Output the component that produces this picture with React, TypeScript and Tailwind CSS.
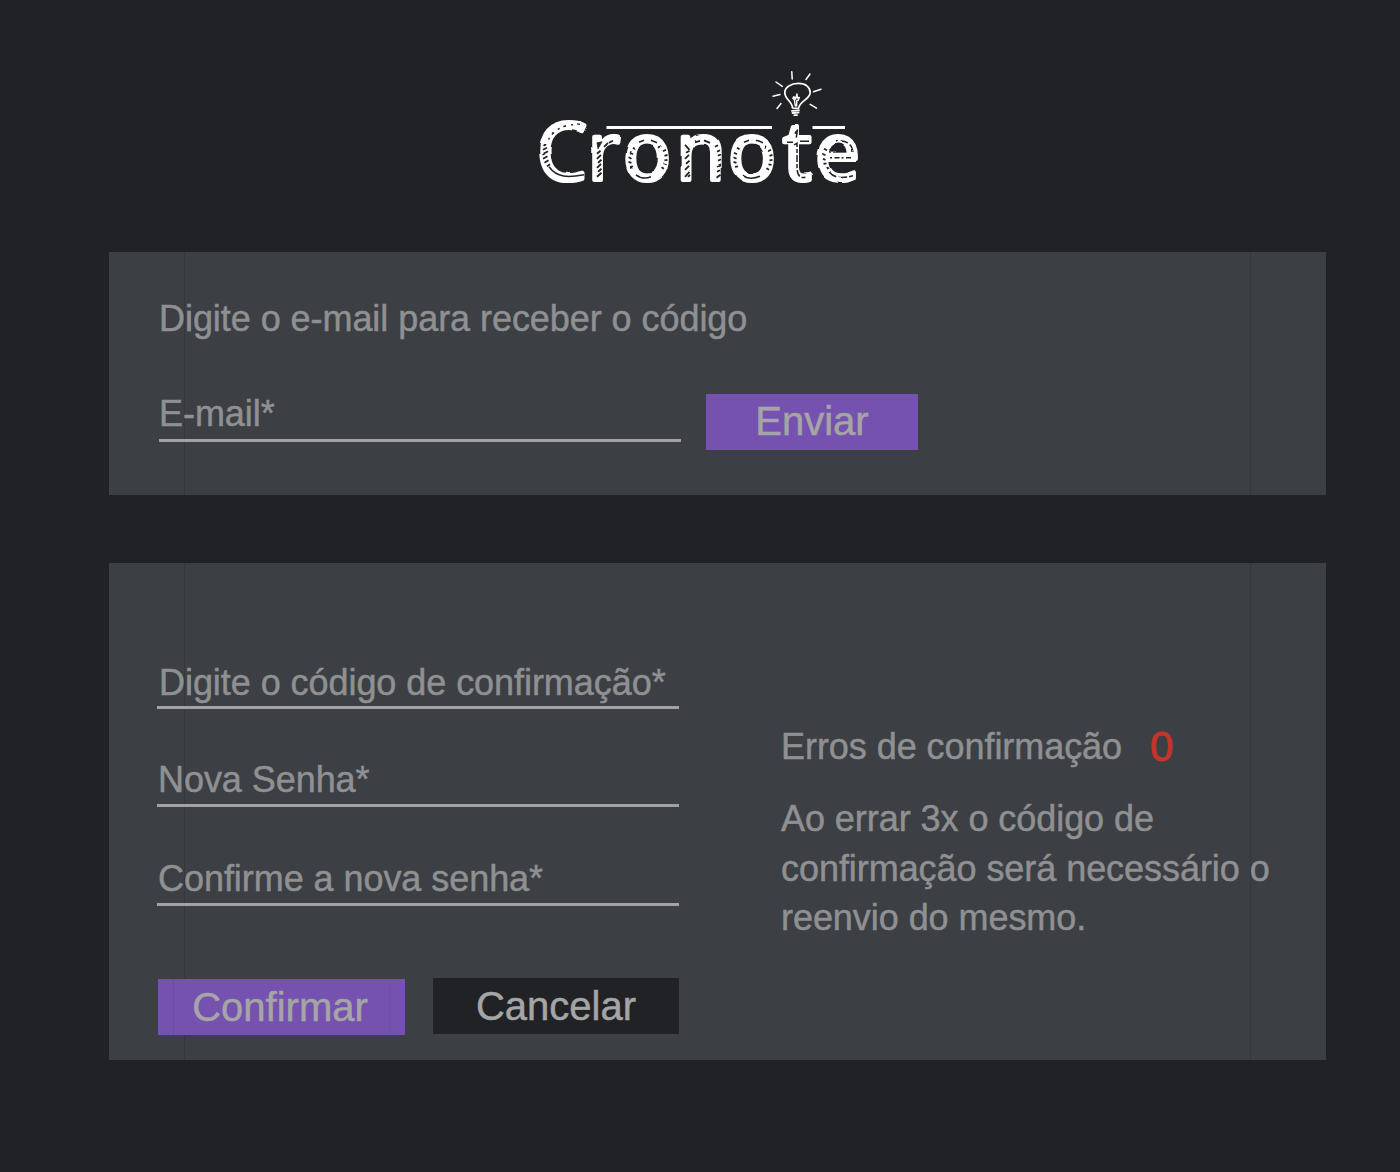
import type { ReactNode } from 'react';

function Logo() {
  return (
    <svg width="340" height="150" viewBox="0 0 340 150" className="block overflow-visible" role="img" aria-label="Cronote">
      <defs>
        <filter id="wobble" x="-5%" y="-5%" width="110%" height="110%" colorInterpolationFilters="sRGB">
          <feTurbulence type="fractalNoise" baseFrequency="0.05" numOctaves="1" seed="4" result="noise" />
          <feDisplacementMap in="SourceGraphic" in2="noise" scale="2.6" xChannelSelector="R" yChannelSelector="G" result="moved" />
          <feGaussianBlur in="moved" stdDeviation="0.35" />
        </filter>
      </defs>
      <g fill="#fff">
        <rect x="76.5" y="66" width="165.5" height="3" />
        <rect x="282.5" y="66" width="32.5" height="3" />
      </g>
      {/* Light bulb with rays */}
      <g fill="none" stroke="#fff" strokeWidth="1.7" strokeLinecap="round" strokeLinejoin="round">
        <path d="M262.5 48C262.5 41.5 254.8 39.5 254.8 32.8C254.8 27 261 23.4 268.5 23.4C276 23.4 280.2 27.5 280.2 32.5C280.2 39.5 269.5 40.5 268.5 48.5Z" />
        <path d="M265.3 46L264.3 39.5L262.8 38.5L263.8 36.7L265.5 39L267 34L267.4 38L269.3 37.4L268.2 40.2L266.8 40.5L266.6 46" strokeWidth="1.4" />
        <path d="M262 50.9L269 50.4M262.5 53L268.6 52.6M264.3 55.2H267" strokeWidth="1.8" />
        <path d="M261.8 11.7L262.2 19M280 14L276 19.5M246 22L252.3 26.3M243 36.2L250 34.6M247 48.5L251 43.5M283.5 31.7L291 29.2M280.2 44.3L286.5 48.2" strokeWidth="1.5" />
      </g>
      <g filter="url(#wobble)" transform="translate(0 0.8)">
        <text
          x="6.5 57.5 93 146 198 253 285"
          y="119.3"
          fill="#fff"
          stroke="#fff"
          strokeWidth="4.2"
          strokeLinejoin="round"
          fontFamily="'Open Sans', sans-serif"
          fontSize="80"
        >
          Cronote
        </text>
        {/* Chalk hatching inside the letter strokes */}
        <g fill="none" stroke="#212226" strokeWidth="1.8">
          <path d="M50 64.5C38 62 23 67 17 82" strokeWidth="1.4" strokeDasharray="3 4 2 5" />
          <path d="M12.5 86l4 -2M12 90l4 -2M12.5 94l4.5 -2.5M13 98l4.5 -2.5M14.5 102l4 -2.5M17 105.5l3 -2" strokeWidth="1.8" />
          <path d="M19 106C27 117 38 117 54 114" strokeWidth="1.5" />
          <path d="M67 93l3.5 -3M67 98l4 -4M68 102l3.5 -3M67 107l4 -4M68 111l3.5 -3M67 116l4.5 -4" strokeWidth="1.9" />
          <path d="M67 82L72 81L68 88Z" fill="#212226" strokeWidth="0.8" />
          <path d="M74 86l4 -4M79 82l4 -2" strokeWidth="1.8" />
          <path d="M99 92l3 1.5M98.5 96.5l3 1.5M98.5 101l3 1M100 106l3 -0.5M136 89l-3 1.5M137.5 94l-3 1M137.5 99l-3 0.5M136.5 104l-3 -0.5M134 109l-2.5 -1.5M102 87l2.5 1.5M131 85l-2 2" strokeWidth="1.8" />
          <path d="M106 114C111 118 116 118 121 116M109 81.5l5 -2M121 79.5l6 2.5" strokeWidth="1.5" />
          <path d="M155 84l4.5 5M156 92l3.5 -2M155 98l4 -4M156 103l3.5 -3M155 109l4 -4M155 116l4.5 -5M158 116l2 -2" strokeWidth="1.8" />
          <path d="M165 80.5l5 -1.5M174 79.5l6 2.5M184 86l3 -1.5M186 91l3 -1.5M187 96l3 -1.5M187 101l3 -1.5M187 106l3 -1.5M187 111l3 -1.5M186.5 117l4 -3" strokeWidth="1.8" />
          <path d="M204 92l3 1.5M203.5 96.5l3 1.5M203.5 101l3 1M205 106l3 -0.5M241 89l-3 1.5M242.5 94l-3 1M242.5 99l-3 0.5M241.5 104l-3 -0.5M239 109l-2.5 -1.5M207 87l2.5 1.5M236 85l-2 2" strokeWidth="1.8" />
          <path d="M212 114C217 118 224 118 230 115.5M214 81.5l5 -2M226 79.5l6 2.5" strokeWidth="1.5" />
          <path d="M265 73l3 -3M267.5 70L266 78M264 84L267 82.5V106C267 115 270 118 277 116" strokeWidth="1.5" strokeDasharray="7 2 4 2" />
          <path d="M257 81.5h6M270 80.5h9" strokeWidth="1.5" />
          <path d="M321 97H298" strokeWidth="1.5" strokeDasharray="5 2.5 2 2" />
          <path d="M323 91C322 83 316 79 306 80" strokeWidth="1.5" strokeDasharray="8 2.5" />
          <path d="M294 88l3 1.5M292.5 93l3 1.5M293 98l2.5 1M293.5 103l3 -0.5M296 108l2.5 -1.5" strokeWidth="1.8" />
          <path d="M299 111C304 117.5 312 118 323 115" strokeWidth="1.5" strokeDasharray="9 2" />
        </g>
      </g>
    </svg>
  );
}

function Panel({ className, children }: { className: string; children: ReactNode }) {
  return (
    <section className={`relative ml-[109px] w-[1217px] bg-[#3c3f43] ${className}`}>
      <div className="pointer-events-none absolute inset-y-0 left-[75px] w-px bg-[#34373b]" />
      <div className="pointer-events-none absolute inset-y-0 right-[75px] w-px bg-[#34373b]" />
      <div className="relative">{children}</div>
    </section>
  );
}

function Field({ label, className }: { label: string; className: string }) {
  return (
    <div className={`w-[522px] border-b-3 border-[#a3a1a3] whitespace-nowrap ${className}`}>{label}</div>
  );
}

export default function App() {
  return (
    <main className="flex h-[1172px] w-[1400px] flex-col overflow-hidden bg-[#212226] font-['Liberation_Sans',Arial,sans-serif] text-[36px] leading-[40px] tracking-[-0.055px] text-[#8f9092] [-webkit-text-stroke:0.5px]">
      <header className="mt-[60px] ml-[530px] h-[150px] shrink-0">
        <Logo />
      </header>

      <Panel className="mt-[42px] h-[243px] shrink-0">
        <form className="pt-[47px] pl-[50px]">
          <p>Digite o e-mail para receber o código</p>
          <div className="mt-[55px] flex gap-[25px]">
            <Field label="E-mail*" className="h-[48px]" />
            <button type="button" className="h-[56px] w-[212px] bg-[#7652b0] pb-[2px] text-[40px] leading-[54px] tracking-normal text-[#a5a5a5]">
              Enviar
            </button>
          </div>
        </form>
      </Panel>

      <Panel className="mt-[68px] h-[497px] shrink-0">
        <div className="flex">
          <form className="ml-[48px] w-[522px] shrink-0 pt-[100px]">
            <Field label="Digite o código de confirmação*" className="h-[46px] pl-[2px]" />
            <Field label="Nova Senha*" className="mt-[51px] h-[47px] pl-px" />
            <Field label="Confirme a nova senha*" className="mt-[52px] h-[47px] pl-px" />
            <div className="mt-[72px] flex gap-[28px] text-[40px] leading-[56px] tracking-normal text-[#a5a5a5]">
              <button type="button" className="relative mt-px ml-px h-[56px] w-[247px] bg-[#7652b0] pr-[3px]">
                <span className="absolute inset-y-0 left-[15px] w-px bg-[#6c4ca1]" />
                <span className="absolute inset-y-0 right-[15px] w-px bg-[#704fa8]" />
                Confirmar
              </button>
              <button type="button" className="h-[56px] w-[246px] bg-[#212226]">
                Cancelar
              </button>
            </div>
          </form>
          <aside className="ml-[102px] w-[500px] pt-[164px]">
            <p className="flex items-center">
              Erros de confirmação
              <span className="ml-[28px] text-[42px] text-[#c5342a] [-webkit-text-stroke:1px]">0</span>
            </p>
            <p className="mt-[27px] leading-[49.5px]">
              Ao errar 3x o código de
              <br />
              confirmação será necessário o
              <br />
              reenvio do mesmo.
            </p>
          </aside>
        </div>
      </Panel>
    </main>
  );
}
